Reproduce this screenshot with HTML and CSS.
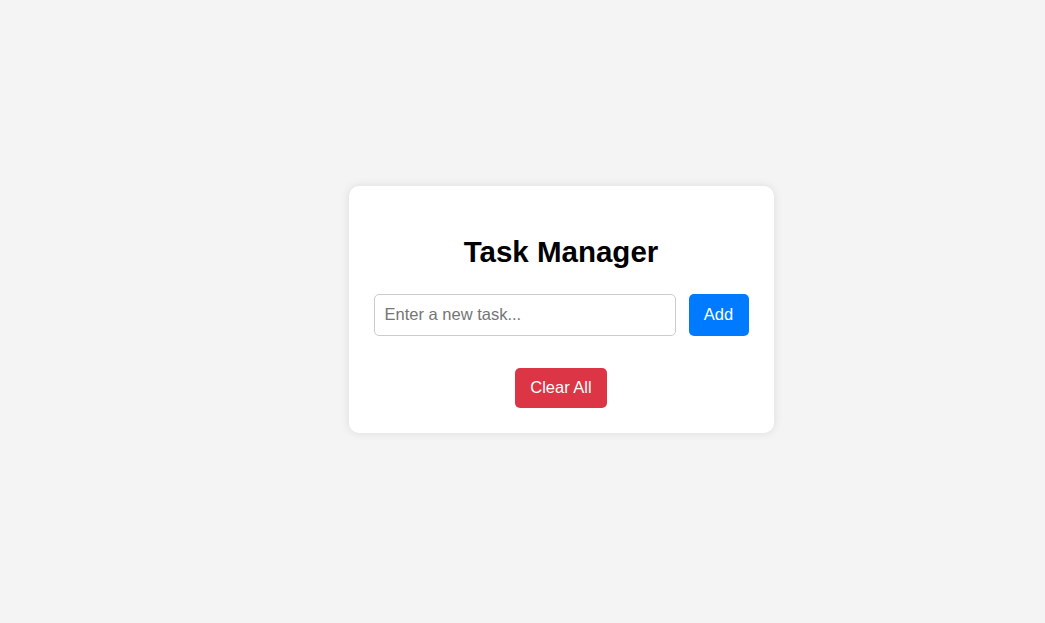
FILE: index.html
```html
<!DOCTYPE html>
<html lang="en">
<head>
<meta charset="UTF-8">
<title>Task Manager</title>
<link rel="stylesheet" href="styles.css">
</head>
<body>
<main class="page">
  <section class="card">
    <h1 class="title">Task Manager</h1>
    <div class="row">
      <input class="task-input" type="text" placeholder="Enter a new task...">
      <button class="btn btn-add">Add</button>
    </div>
    <ul class="list"></ul>
    <button class="btn btn-clear">Clear All</button>
  </section>
</main>
</body>
</html>
```
FILE: styles.css
```css
html, body {
  margin: 0;
  padding: 0;
  background: #f4f4f4;
  font-family: "Liberation Sans", Arial, sans-serif;
}
.page {
  box-sizing: border-box;
  min-height: 623px;
  height: 100vh;
  display: flex;
  align-items: center;
  justify-content: center;
  padding-left: 77px;
  padding-bottom: 5px;
}
.card {
  width: 425px;
  box-sizing: border-box;
  background: #fff;
  border-radius: 10px;
  box-shadow: 0 0 10px rgba(0, 0, 0, 0.1);
  padding: 25px;
  display: flex;
  flex-direction: column;
  align-items: center;
}
.title {
  margin: 22px 0 24px;
  font-size: 29.5px;
  line-height: 37px;
  font-weight: bold;
  color: #000;
  text-align: center;
}
.row {
  display: flex;
  width: 100%;
  gap: 13px;
}
.task-input {
  flex: 1;
  min-width: 0;
  height: 42px;
  box-sizing: border-box;
  border: 1px solid #ccc;
  border-radius: 5px;
  padding: 0 10px;
  font-family: "Liberation Sans", Arial, sans-serif;
  font-size: 16.5px;
  color: #333;
  outline: none;
}
.task-input::placeholder {
  color: #757575;
}
.btn {
  border: none;
  border-radius: 5px;
  color: #fff;
  font-family: "Liberation Sans", Arial, sans-serif;
  font-size: 16.5px;
  padding: 0 15px;
  cursor: pointer;
}
.btn-add {
  width: 60px;
  height: 42px;
  background: #007bff;
}
.list {
  list-style: none;
  margin: 0;
  padding: 0;
  width: 100%;
  height: 32px;
}
.btn-clear {
  height: 40px;
  width: 92px;
  background: #dc3545;
  padding: 0;
}
```
